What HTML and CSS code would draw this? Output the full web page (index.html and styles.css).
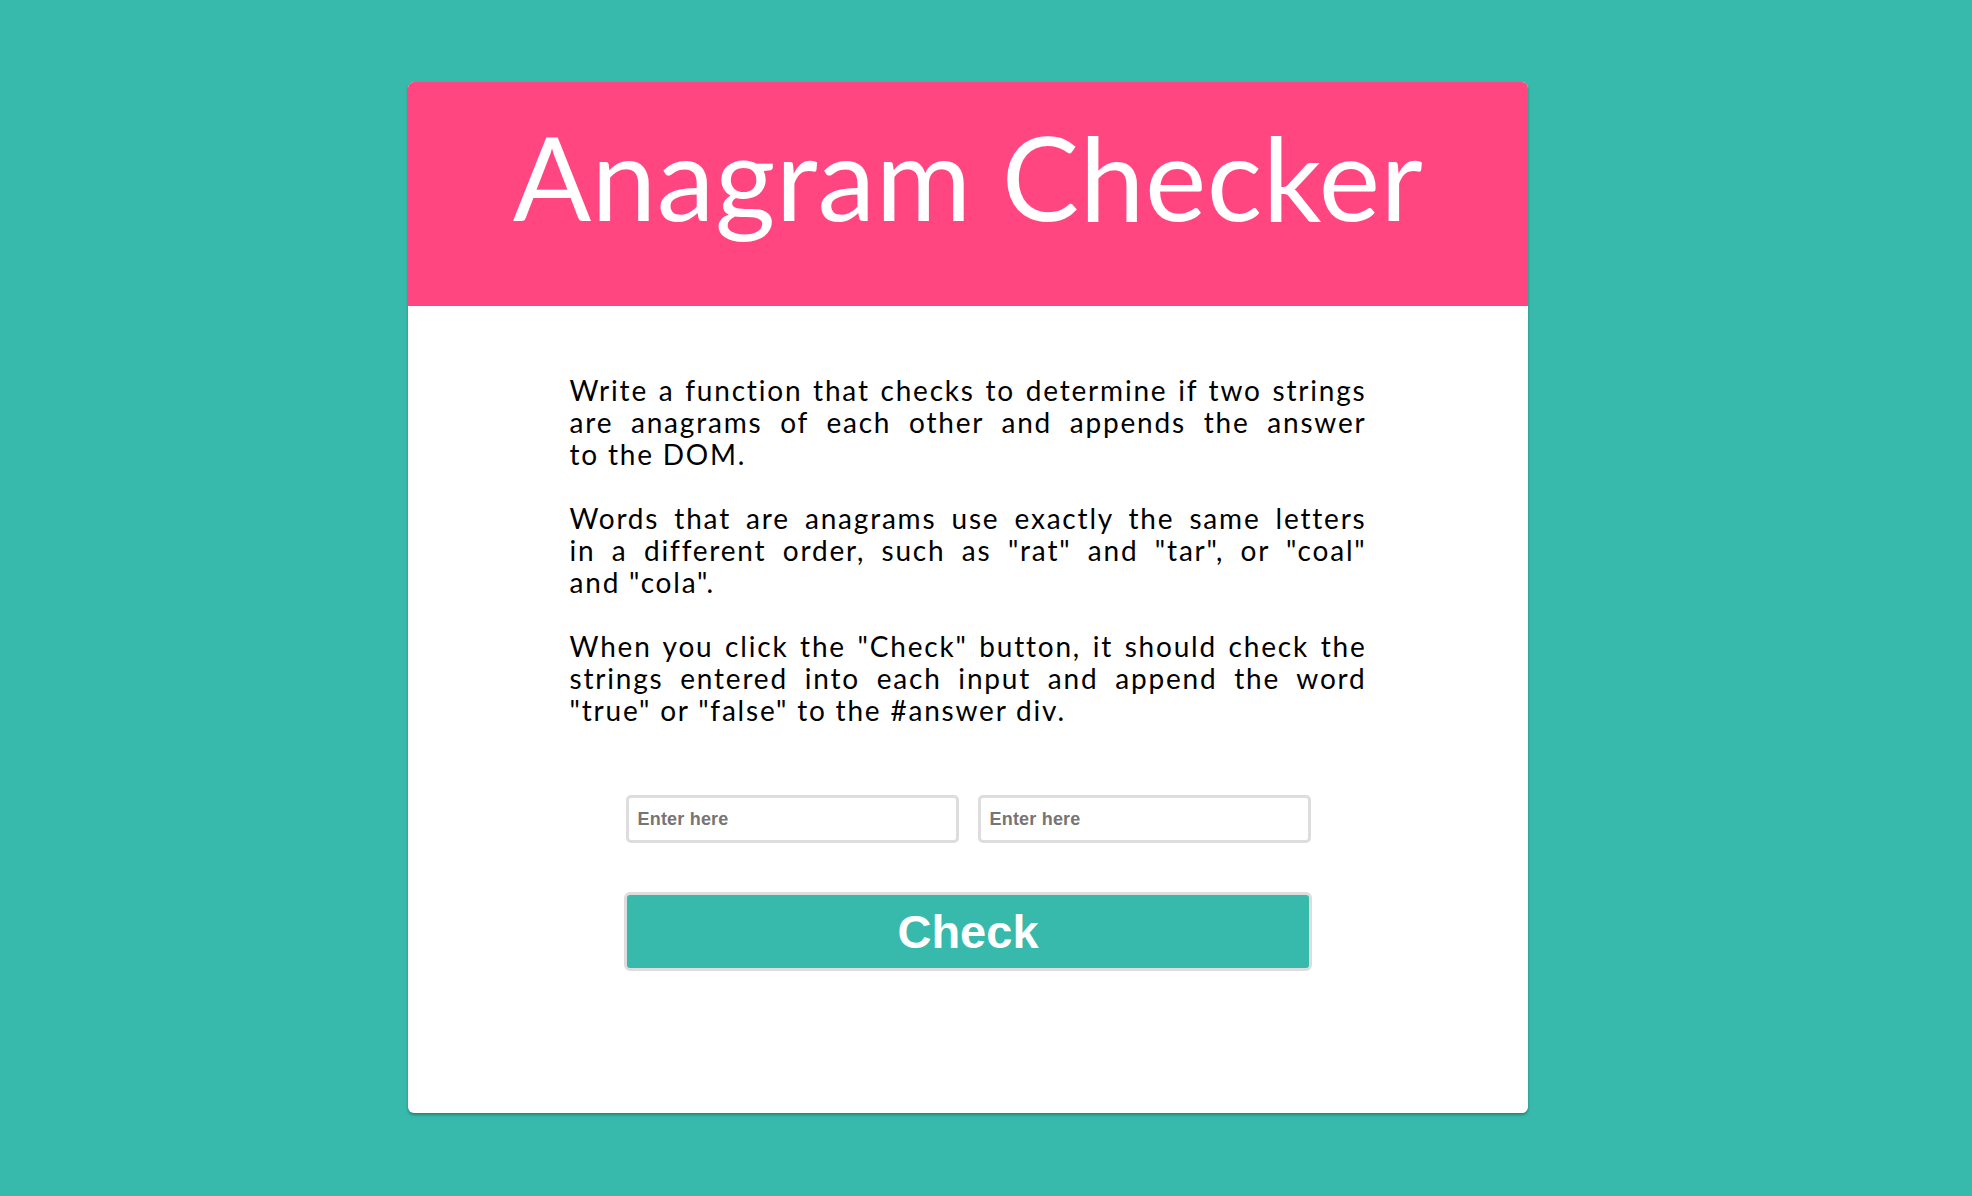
FILE: index.html
```html
<!DOCTYPE html>
<html lang="en">
<head>
<meta charset="utf-8">
<title>Anagram Checker</title>
<link rel="stylesheet" href="styles.css">
</head>
<body>
  <main class="card">
    <header class="card-header">
      <h1 class="title">Anagram Checker</h1>
    </header>
    <section class="card-body">
      <div class="prompt">
        <p class="para">
          <span class="line">Write a function that checks to determine if two strings</span>
          <span class="line">are anagrams of each other and appends the answer</span>
          <span class="line last">to the DOM.</span>
        </p>
        <p class="para">
          <span class="line">Words that are anagrams use exactly the same letters</span>
          <span class="line">in a different order, such as "rat" and "tar", or "coal"</span>
          <span class="line last">and "cola".</span>
        </p>
        <p class="para">
          <span class="line">When you click the "Check" button, it should check the</span>
          <span class="line">strings entered into each input and append the word</span>
          <span class="line last">"true" or "false" to the #answer div.</span>
        </p>
      </div>
      <div class="inputs">
        <input class="field" type="text" placeholder="Enter here">
        <input class="field" type="text" placeholder="Enter here">
      </div>
      <button class="check" type="button">Check</button>
      <div id="answer"></div>
    </section>
  </main>
</body>
</html>
```

FILE: styles.css
```css
html, body {
  margin: 0;
  padding: 0;
}

body {
  background: #37baac;
  padding: 82px 36px 82px 0;
  font-family: Lato, "Open Sans", sans-serif;
}

.card {
  width: 1120px;
  margin: 0 auto;
  background: #ffffff;
  border-radius: 6px;
  box-shadow: 0 2px 3px rgba(0, 0, 0, 0.3);
  overflow: hidden;
}

.card-header {
  background: #ff4681;
  height: 224px;
  display: flex;
  align-items: center;
  justify-content: center;
}

.title {
  margin: 0;
  color: #ffffff;
  font-family: Lato, sans-serif;
  font-weight: 400;
  font-size: 116px;
  line-height: 1;
  letter-spacing: 0.5px;
  padding-bottom: 34px;
}

.card-body {
  height: 807px;
  box-sizing: border-box;
  padding-top: 68px;
  display: flex;
  flex-direction: column;
  align-items: center;
}

.prompt {
  width: 797px;
  font-size: 28px;
  line-height: 32px;
  letter-spacing: 1.8px;
  color: #000000;
}

.para {
  margin: 0 0 32px;
}

.para:last-child {
  margin-bottom: 0;
}

.line {
  display: block;
  text-align: justify;
  text-align-last: justify;
  white-space: nowrap;
}

.line.last {
  text-align-last: left;
}

.inputs {
  margin-top: 69px;
  display: flex;
  gap: 19px;
}

.field {
  width: 333px;
  height: 48px;
  box-sizing: border-box;
  border: 3px solid #dddddd;
  border-radius: 5px;
  padding: 0 9px;
  font-family: "Liberation Sans", Arial, sans-serif;
  font-weight: 700;
  font-size: 18px;
  letter-spacing: 0.2px;
  color: #333333;
  outline: none;
}

.field::placeholder {
  color: #757575;
}

.check {
  margin-top: 49px;
  width: 688px;
  height: 79px;
  box-sizing: border-box;
  background: #37baac;
  border: 3px solid #dddddd;
  border-radius: 6px;
  color: #ffffff;
  font-family: "Liberation Sans", Arial, sans-serif;
  font-weight: 700;
  font-size: 47px;
  letter-spacing: 0;
  padding: 0;
  cursor: pointer;
}
```
